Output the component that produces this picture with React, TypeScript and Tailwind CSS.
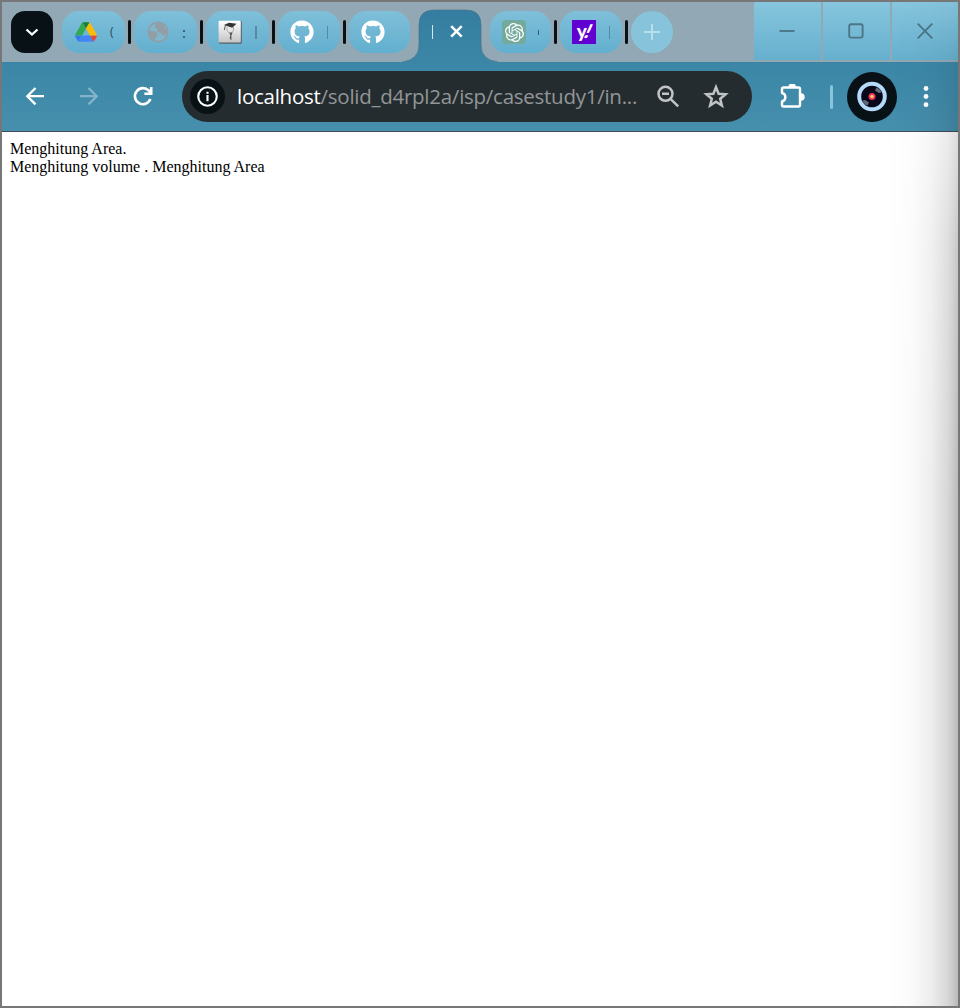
import { ReactNode } from "react";
import { FaGithub } from "react-icons/fa";
import { SiOpenai } from "react-icons/si";

const tabFill = "bg-linear-to-b from-[#7fbfd9] to-[#62afcf]";

function Divider() {
  return <div className="mx-[3px] h-6 w-[3px] shrink-0 rounded-sm bg-[#081116]" />;
}

function Tab({ icon, clip, width = "w-[63px]" }: { icon: ReactNode; clip?: ReactNode; width?: string }) {
  return (
    <div className={`flex h-[42px] shrink-0 items-center rounded-[17px] pl-3 ${width} ${tabFill}`}>
      <div className="flex size-6 shrink-0 items-center justify-center">{icon}</div>
      {clip}
    </div>
  );
}

function Sliver({ className }: { className: string }) {
  return <div className={`shrink-0 ${className}`} />;
}

function DriveIcon() {
  return (
    <svg viewBox="0 0 87.3 78" className="h-5 w-[22px]">
      <path d="m6.6 66.85 3.85 6.65c.8 1.4 1.95 2.5 3.3 3.3l13.75-23.8h-27.5c0 1.55.4 3.1 1.2 4.5z" fill="#3478ed" />
      <path d="m43.65 25-13.75-23.8c-1.35.8-2.5 1.9-3.3 3.3l-25.4 44a9.06 9.06 0 0 0-1.2 4.5h27.5z" fill="#34a853" />
      <path d="m43.65 25 13.75-23.8c-1.35-.8-2.9-1.2-4.5-1.2h-18.5c-1.6 0-3.15.45-4.5 1.2z" fill="#188038" />
      <path d="M59.8 53H27.5L13.75 76.8c1.35.8 2.9 1.2 4.5 1.2h50.8c1.6 0 3.15-.45 4.5-1.2z" fill="#4285f4" />
      <path d="M59.8 53h27.5c0 1.55-.4 3.1-1.2 4.5L76.85 73.5a9 9 0 0 1-3.3 3.3z" fill="#ea4335" />
      <path d="m73.4 26.5-12.7-22c-.8-1.4-1.95-2.5-3.3-3.3l-13.75 23.8 16.15 28h27.45c0-1.55-.4-3.1-1.2-4.5z" fill="#fbbc04" />
    </svg>
  );
}

function GlobeIcon() {
  return (
    <svg viewBox="0 0 24 24" className="size-6">
      <circle cx="12" cy="12" r="9.7" fill="#7fb6cc" stroke="#939da5" strokeWidth="1.7" />
      <path d="M12.5 2.5 9 5.2v2.4l3 1.8-1 2.2 3.8 1.5 1.4 2.4 5-1.2 1-4.2-3.2-1.2-1.5-2.6 1.1-2.3zM2.3 11.2l6.5.1 3 2.8-.6 2.3-2 1-.4 3.6-3.7-2.4z" fill="#939da5" />
    </svg>
  );
}

function ScholarIcon() {
  return (
    <svg viewBox="0 0 24 24" className="size-6">
      <defs>
        <linearGradient id="paper" x1="0" y1="0" x2="0" y2="1">
          <stop stopColor="#fff" />
          <stop offset="1" stopColor="#c4c4c4" />
        </linearGradient>
      </defs>
      <rect x="1" y="1" width="22.8" height="22.8" rx="1" fill="#566168" />
      <rect x=".6" y=".8" width="22.2" height="21.8" rx="1" fill="url(#paper)" />
      <path d="m6 5 5-2.2 7.5.9-4.3 4z" fill="#333" />
      <path d="M7.5 5 6.3 10" stroke="#555" strokeWidth="1" />
      <path d="M9 7v3.5l2 2.5m4.5-6v3.5l-2 2.5" fill="none" stroke="#aaa" strokeWidth="1" />
      <path d="M11.2 12.5h3.4l-1.2 3v5l-1.8-2.2.7-2.8z" fill="#555" />
    </svg>
  );
}

function TabStrip() {
  return (
    <div className="flex h-[60px] shrink-0 items-start bg-[#92a9b5] pl-[9px]">
      <button className="mt-[9px] flex size-[42px] shrink-0 items-center justify-center rounded-[14px] bg-[#081116]">
        <svg viewBox="0 0 16 16" className="size-4" fill="none" stroke="white" strokeWidth="2.3">
          <path d="m2.5 5.5 5.5 5 5.5-5" />
        </svg>
      </button>
      <div className="mt-2 ml-[9px] flex h-[44px] shrink-0 items-center">
        <Tab
          icon={<DriveIcon />}
          clip={<div className="ml-[12px] font-['Open_Sans',sans-serif] text-[12px] leading-[16px] text-[#294956]">(</div>}
        />
        <Divider />
        <Tab
          icon={<GlobeIcon />}
          clip={<div className="ml-[12px] pb-px font-['Open_Sans',sans-serif] text-[15px] leading-[20px] text-[#294956]">:</div>}
        />
        <Divider />
        <Tab icon={<ScholarIcon />} clip={<Sliver className="ml-[13px] h-[13px] w-0.5 bg-[#568ca3]" />} />
        <Divider />
        <Tab width="w-[62px]" icon={<FaGithub className="size-6 text-white" />} clip={<Sliver className="ml-[13px] h-[13px] w-px bg-[#568ca3]" />} />
        <Divider />
        <Tab width="w-[61px]" icon={<FaGithub className="size-6 text-white" />} />
      </div>
      <div className="-mr-[17px] -ml-[8px] h-[60px] w-[96px] shrink-0">
        <svg viewBox="0 0 96 60" className="h-[60px] w-[96px]">
          <defs>
            <linearGradient id="active" x1="0" y1="0" x2="0" y2="1">
              <stop stopColor="#347da0" />
              <stop offset="1" stopColor="#3b86a6" />
            </linearGradient>
          </defs>
          <path d="M0 60Q17 58 17 43V23Q17 8 32 8H64Q79 8 79 23V43Q79 58 96 60Z" fill="url(#active)" />
          <path d="M0 60Q17 58 17 43V23Q17 8 32 8H64Q79 8 79 23V43Q79 58 96 60" fill="none" stroke="#497487" strokeWidth=".7" />
          <path d="M30.5 23v14" stroke="#d5e5ed" strokeWidth="1" />
          <path d="m49.2 24.2 10.5 10.5m0-10.5L49.2 34.7" stroke="white" strokeWidth="2.5" />
        </svg>
      </div>
      <div className="mt-2 ml-[9px] flex h-[44px] shrink-0 items-center">
        <Tab
          width="w-[61px]"
          icon={<div className="flex size-6 items-center justify-center rounded bg-[#74aa9c]"><SiOpenai className="size-[19px] text-white" /></div>}
          clip={<Sliver className="ml-[12px] h-[5px] w-px bg-[#315f72]" />}
        />
        <Divider />
        <Tab
          width="w-[62px]"
          icon={<div className="flex size-6 items-center justify-center bg-[#6001d2] pb-1 font-['Lato',sans-serif] text-[19px] leading-none font-black tracking-[-0.5px] text-white">y<span className="inline-block -skew-x-[24deg]">!</span></div>}
          clip={<Sliver className="ml-[13px] h-[13px] w-px bg-[#568ca3]" />}
        />
        <Divider />
      </div>
      <button className="mt-[9px] flex size-[42px] shrink-0 items-center justify-center rounded-full bg-[#87c4dc]">
        <svg viewBox="0 0 16 16" className="size-4" stroke="#b9dfed" strokeWidth="2"><path d="M8 0v16M0 8h16" /></svg>
      </button>
      <div className="ml-auto flex h-[58px] shrink-0 gap-0.5">
        {[0, 1, 2].map((n) => (
          <div key={n} className={`flex items-center justify-center bg-linear-to-b from-[#86c5dd] to-[#66b0ce] ${n === 2 ? "w-[66px]" : "w-[67px] pr-px"}`}>
            <svg viewBox="0 0 16 16" className="size-4" fill="none" stroke="#4c7587" strokeWidth="1.9">
              {n === 0 && <path d="M.5 8h15" />}
              {n === 1 && <rect x="1.2" y="1.2" width="13.4" height="13.4" rx="1.8" />}
              {n === 2 && <path d="m.7.7 14.6 14.6m0-14.6L.7 15.3" />}
            </svg>
          </div>
        ))}
      </div>
    </div>
  );
}

function Toolbar() {
  return (
    <div className="flex h-[69px] shrink-0 items-center bg-linear-to-b from-[#3b86a6] to-[#468fad]">
      <svg viewBox="0 0 20 20" className="ml-[23px] size-5 shrink-0" fill="none" stroke="white" strokeWidth="2.3">
        <path d="M19 9.2H2.5M10.5 1 2.3 9.2l8.2 8.2" />
      </svg>
      <svg viewBox="0 0 20 20" className="ml-[34px] size-5 shrink-0" fill="none" stroke="#85b4c8" strokeWidth="2.3">
        <path d="M1 9.2h16.5M9.5 1l8.2 8.2-8.2 8.2" />
      </svg>
      <svg viewBox="0 0 20 20" className="ml-[34px] size-5 shrink-0 overflow-visible" fill="none" stroke="white" strokeWidth="2.6">
        <path d="M17.4 12.1A8 8 0 1 1 15.8 3.7L18 6.1M18.2 0v6.8h-6.8" />
      </svg>
      <div className="ml-[29px] flex h-[51px] w-[570px] shrink-0 items-center rounded-full bg-[#252c2f] pl-[8px]">
        <div className="flex size-[35px] shrink-0 items-center justify-center rounded-full bg-[#081116]">
          <svg viewBox="0 0 22 22" className="size-[21px]" fill="none" stroke="white" strokeWidth="2.2">
            <circle cx="11" cy="11" r="9.7" /><path d="M11 9.5v6.5M11 6v2" />
          </svg>
        </div>
        <div className="ml-[12px] w-[402px] shrink-0 pb-0.5 font-['Open_Sans',sans-serif] text-[20.5px] leading-[28px] tracking-[-0.26px] whitespace-nowrap text-[#929698]">
          <span className="text-white">localhost</span>/solid_d4rpl2a/isp/casestudy1/in...
        </div>
        <svg viewBox="0 0 24 24" className="ml-[17px] size-6 shrink-0" fill="none" stroke="#c1c3c4" strokeWidth="2.5">
          <circle cx="9.5" cy="8.800" r="7" /><path d="m14.500 13.800 7.700 7.500M6 8.800h7" />
        </svg>
        <svg viewBox="0 0 24 24" className="ml-[24px] size-6 shrink-0 overflow-visible" fill="none" stroke="#c1c3c4" strokeWidth="2.5">
          <path d="m12 2.2 2.6 6.5 7 .5-5.4 4.5 1.700 6.900-5.900-3.800-5.900 3.800 1.700-6.900-5.400-4.500 7-.5z" />
        </svg>
      </div>
      <svg viewBox="0 0 26 26" className="ml-[28px] size-[26px] shrink-0">
        <path d="M3.500 3.500h15Q20 3.500 20 5v16Q20 22.500 18.500 22.500h-15Q2 22.500 2 21v-3.500C6.500 16.500 6.500 10 2 9v-4Q2 3.500 3.500 3.500z" fill="none" stroke="white" strokeWidth="2.4" strokeLinejoin="round" />
        <path d="M8.500 3a3.700 3.700 0 0 1 7.400 0zM21 9.300a3.700 3.700 0 0 1 0 7.400z" fill="white" />
      </svg>
      <div className="ml-[24px] h-6 w-[3px] shrink-0 rounded-full bg-[#86c5dd]" />
      <svg viewBox="0 0 50 50" className="ml-[14px] size-[50px] shrink-0">
        <circle cx="25" cy="25" r="25" fill="#081116" />
        <circle cx="25" cy="24.500" r="12.800" fill="#080719" stroke="#b4dafa" strokeWidth="4" />
        <path d="m28 18.500 1.500-3q4 1.500 5 5l-2.500.5zM22 30.500l-1.500 3q-4-1.500-5-5l2.500-.5z" fill="#626b78" />
        <circle cx="25" cy="24.500" r="3.500" fill="#ed315d" /><circle cx="25" cy="24.500" r="1.800" fill="#ffc75c" />
      </svg>
      <svg viewBox="0 0 6 22" className="ml-[26px] h-[22px] w-[6px] shrink-0" fill="white">
        <circle cx="3" cy="2.500" r="2.400" /><circle cx="3" cy="10.500" r="2.400" /><circle cx="3" cy="18.700" r="2.400" />
      </svg>
    </div>
  );
}

export default function App() {
  return (
    <div className="relative flex h-[1008px] w-[960px] flex-col overflow-hidden border-2 border-[#777] bg-white">
      <TabStrip />
      <Toolbar />
      <div className="h-px shrink-0 bg-[#424b5b]" />
      <main className="flex-1 px-2 pt-2 font-['Liberation_Serif',serif] text-[16px] leading-[18px] text-black">
        Menghitung Area.<br />Menghitung volume . Menghitung Area
      </main>
      <div className="pointer-events-none absolute top-0 right-0 h-full w-[70px] bg-[linear-gradient(to_right,transparent,rgb(0_0_0/0.02)_35%,rgb(0_0_0/0.07)_62%,rgb(0_0_0/0.16)_86%,rgb(0_0_0/0.27))] mask-[linear-gradient(to_bottom,rgb(0_0_0/0.1),rgb(0_0_0/0.4)_100px,rgb(0_0_0/0.8)_240px,black_500px)]" />
    </div>
  );
}
